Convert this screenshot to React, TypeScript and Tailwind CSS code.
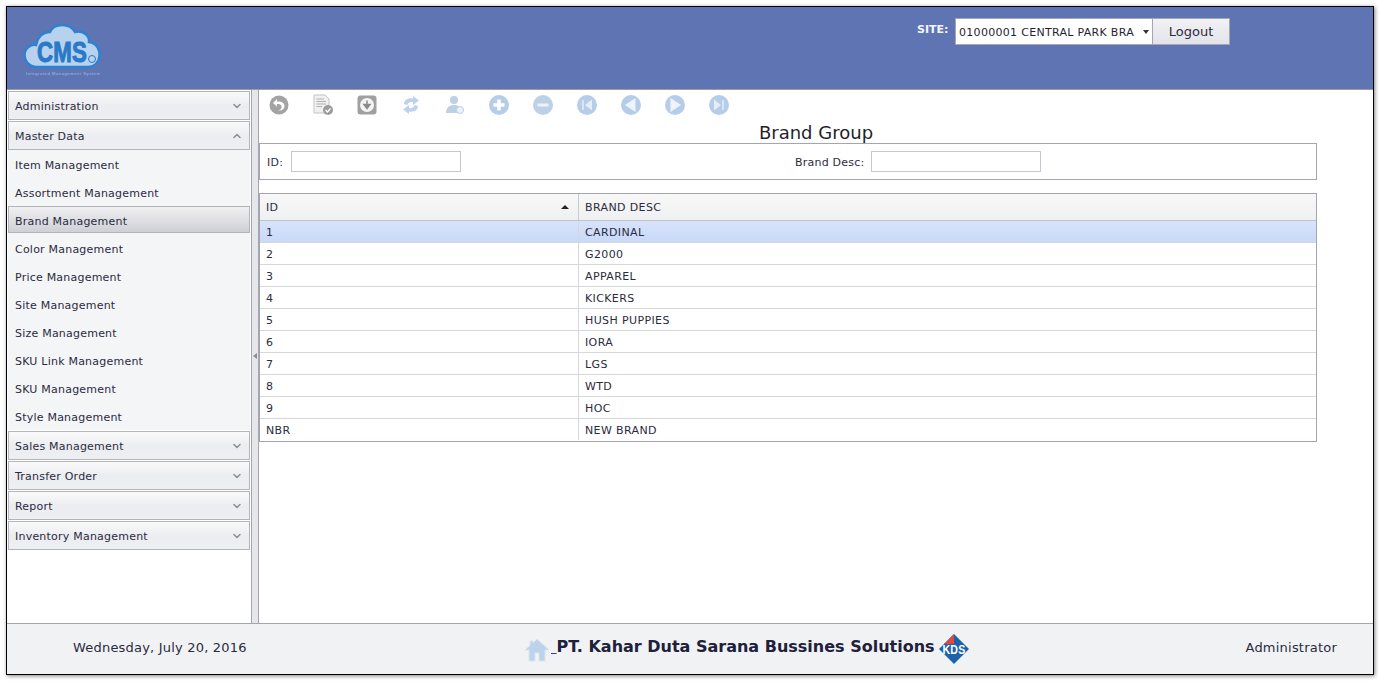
import { ChevronDown, ChevronUp } from 'lucide-react';

const menuTop = ['Administration', 'Master Data'];
const subItems = ['Item Management', 'Assortment Management', 'Brand Management', 'Color Management', 'Price Management', 'Site Management', 'Size Management', 'SKU Link Management', 'SKU Management', 'Style Management'];
const menuBottom = ['Sales Management', 'Transfer Order', 'Report', 'Inventory Management'];
const rows = [
  ['1', 'CARDINAL'], ['2', 'G2000'], ['3', 'APPAREL'], ['4', 'KICKERS'], ['5', 'HUSH PUPPIES'],
  ['6', 'IORA'], ['7', 'LGS'], ['8', 'WTD'], ['9', 'HOC'], ['NBR', 'NEW BRAND'],
];

function MenuHeader({ label, open }: { label: string; open?: boolean }) {
  return (
    <div className="flex h-[29px] items-center justify-between border border-[#b4b5b9] bg-gradient-to-b from-[#fafafb] via-[#ecedf0] to-[#eeeff2] pl-[6px] pr-[6px] text-[#2b2b40]">
      <span className="pt-[4px]">{label}</span>
      {open ? <ChevronUp size={12} strokeWidth={3} className="text-[#8d8f94]" /> : <ChevronDown size={12} strokeWidth={3} className="text-[#8d8f94]" />}
    </div>
  );
}

function Circle({ children, fill = '#b5cde9' }: { children?: React.ReactNode; fill?: string }) {
  return (
    <svg width="22" height="22" viewBox="0 0 22 22">
      <circle cx="11" cy="11" r="10" fill={fill} />
      {children}
    </svg>
  );
}

function Toolbar() {
  return (
    <div className="flex h-[30px] items-center gap-[22px] pl-[9px]">
      <svg width="22" height="22" viewBox="0 0 22 22">
        <circle cx="11" cy="11" r="9.5" fill="#a3a3a3" />
        <path d="M9 5 L5 9 L9 12.5 V10 C12 9.5 14 11 13.5 13.5 C13.2 15 12 16 10.5 16.5 C14 17 16.5 15 16.5 12 C16.5 8.5 13 7 9 7.5 Z" fill="#fff" />
      </svg>
      <svg width="22" height="22" viewBox="0 0 22 22">
        <path d="M2 1 H13 L17 5 V19 H2 Z" fill="#f0f0f0" stroke="#c4c4c4" />
        <path d="M4.500 5 H12 M4.500 7.500 H14 M4.500 10 H14 M4.500 12.500 H10" stroke="#b0b0b0" />
        <circle cx="16" cy="16" r="5" fill="#9c9c9c" />
        <path d="M13.500 16 L15.500 18 L18.500 14.500" stroke="#fff" strokeWidth="1.300" fill="none" />
      </svg>
      <svg width="22" height="22" viewBox="0 0 22 22">
        <rect x="1.500" y="1.500" width="19" height="19" rx="3" fill="#a0a0a0" />
        <circle cx="11" cy="11" r="7" fill="#f4f4f4" />
        <path d="M11 6.500 V12 M8 10.500 L11 14.500 L14 10.500 Z" stroke="#8a8a8a" strokeWidth="1.500" fill="#8a8a8a" />
      </svg>
      <svg width="22" height="22" viewBox="0 0 22 22" fill="#bdd2ec">
        <path d="M4 10 C4 6 8 3.500 13 4.500 V2 L19 6.500 L13 11 V8 C10 7.500 8 8.500 7.500 11 Z" />
        <path d="M18 12 C18 16 14 18.500 9 17.500 V20 L3 15.500 L9 11 V14 C12 14.500 14 13.500 14.500 11 Z" />
      </svg>
      <svg width="22" height="22" viewBox="0 0 22 22">
        <circle cx="10" cy="6" r="4" fill="#bdd0e6" />
        <path d="M2 19 C2 13 6 11 10 11 C14 11 18 13 18 19 Z" fill="#bdd0e6" />
        <circle cx="16" cy="16" r="3.500" fill="#eef2f7" stroke="#bdd0e6" />
      </svg>
      <Circle>
        <path d="M11 5.500 V16.500 M5.500 11 H16.500" stroke="#fff" strokeWidth="3.500" />
      </Circle>
      <Circle fill="#bcd0e8">
        <path d="M5.500 11 H16.500" stroke="#eef2f8" strokeWidth="3" />
      </Circle>
      <Circle>
        <path d="M7 6 V16" stroke="#e6edf6" strokeWidth="1.500" />
        <path d="M16 5.500 V16.500 L9 11 Z" fill="#e6edf6" />
      </Circle>
      <Circle>
        <path d="M15.500 4 V18 L5 11 Z" fill="#f0f4fa" />
      </Circle>
      <Circle>
        <path d="M6.500 4 V18 L17 11 Z" fill="#f0f4fa" />
      </Circle>
      <Circle>
        <path d="M15 6 V16" stroke="#e6edf6" strokeWidth="1.500" />
        <path d="M6 5.500 V16.500 L13 11 Z" fill="#e6edf6" />
      </Circle>
    </div>
  );
}

export default function App() {
  return (
    <div className="h-[681px] w-[1380px] bg-white p-[6px] text-[11px] tracking-[0.22px] text-[#2b2b40]" style={{ fontFamily: '"DejaVu Sans", Verdana, sans-serif' }}>
      <div className="flex h-[669px] flex-col border border-black shadow-[1px_1px_4px_rgba(0,0,0,0.5)]">
        <header className="flex h-[83px] shrink-0 items-start border-b border-[#9a9aa8] bg-[#5f75b3]">
          <svg width="84" height="62" viewBox="0 0 84 62" className="ml-[15px] mt-[15px]">
            <path d="M15 45 C6 45 2.500 38 2.500 33 C2.500 26 9 22 14 23 C15 16 20 10 28 10 C32 0.500 48 0.500 53 10 C60 8 68 13 67 20 C75 21 78 28 77.500 34 C77 41 72 45 66 45 Z" fill="#b6d2ee" stroke="#2f80cf" strokeWidth="2.500" />
            <text x="40" y="40" textAnchor="middle" fontFamily="Liberation Sans" fontWeight="700" fontSize="29" fill="#2a78c8" stroke="#2a78c8" strokeWidth="1" textLength="50" lengthAdjust="spacingAndGlyphs">CMS</text>
            <circle cx="70" cy="37" r="3.500" fill="#b6d2ee" stroke="#2a78c8" />
            <text x="41" y="53" textAnchor="middle" fontFamily="Liberation Sans" fontSize="4" fill="#9fc0e6" textLength="74">Integrated Management System</text>
          </svg>
          <div className="ml-auto mr-[143px] mt-[11px] flex items-start">
            <span className="mr-[6px] mt-[4px] w-[32px] text-[11px] font-bold tracking-normal text-[#f4f5fa]">SITE:</span>
            <div className="flex h-[27px] w-[198px] items-center border border-[#a3a6b5] bg-white pl-[3px] text-[11px] tracking-[0.3px] text-[#1f1f35]">
              <span className="w-[184px] whitespace-nowrap pt-[4px]">01000001 CENTRAL PARK BRA</span>
              <span className="h-0 w-0 border-x-[3.5px] border-t-[4px] border-x-transparent border-t-[#333]" />
            </div>
            <div className="flex h-[27px] w-[77px] items-center justify-center border border-l-0 border-[#a3a6b5] bg-gradient-to-b from-[#f2f2f4] to-[#e3e4ea] text-[13px] tracking-normal text-[#2b2b40]">Logout</div>
          </div>
        </header>

        <div className="flex min-h-0 flex-1">
          <aside className="flex w-[244px] shrink-0 flex-col gap-px px-px pt-px">
            <MenuHeader label={menuTop[0]} />
            <MenuHeader label={menuTop[1]} open />
            <div className="-mt-px bg-[#f4f5f7]">
              {subItems.map((item) =>
                item === 'Brand Management' ? (
                  <div key={item} className="mb-px flex h-[27px] items-center border border-[#b4b5b9] bg-gradient-to-b from-[#f0f0f2] to-[#cfd0d6] pl-[6px] pt-[5px]">{item}</div>
                ) : (
                  <div key={item} className="flex h-[28px] items-center pl-[7px] pt-[4px]">{item}</div>
                ),
              )}
            </div>
            {menuBottom.map((m) => <MenuHeader key={m} label={m} />)}
          </aside>

          <div className="flex w-[8px] shrink-0 items-center border-x border-[#a5a6ac] bg-[#e6e7eb]">
            <span className="ml-px mb-[2px] h-0 w-0 border-y-[3px] border-r-[4px] border-y-transparent border-r-[#8a8c92]" />
          </div>

          <main className="w-[1058px] shrink-0">
            <Toolbar />
            <h1 className="-mt-[3px] h-[26px] pl-[56px] text-center text-[18px] leading-[32px] tracking-normal text-[#1f1f2e]">Brand Group</h1>
            <div className="flex h-[37px] items-center border border-[#a5a4b4] pl-[7px]">
              <span className="w-[17px] pt-[4px]">ID:</span>
              <div className="ml-[7px] h-[21px] w-[170px] border border-[#c6c7d2] bg-white" />
              <span className="ml-[334px] w-[69px] whitespace-nowrap pt-[4px]">Brand Desc:</span>
              <div className="ml-[7px] h-[21px] w-[170px] border border-[#c6c7d2] bg-white" />
            </div>
            <div className="mt-[13px] border border-[#a5a4b4] tracking-[0.38px]">
              <div className="flex h-[27px] border-b border-[#c2c3c8] bg-gradient-to-b from-[#f8f8f8] to-[#eff0f1]">
                <div className="flex w-[319px] items-center justify-between border-r border-[#c8c9d0] pl-[6px] pr-[9px]">
                  <span className="pt-[2px]">ID</span>
                  <span className="h-0 w-0 border-x-[4px] border-b-[4px] border-x-transparent border-b-[#222]" />
                </div>
                <div className="flex items-center pl-[6px] pt-[2px]">BRAND DESC</div>
              </div>
              {rows.map(([id, desc], i) => (
                <div key={id} className={`flex h-[22px] items-center border-b ${i < rows.length - 1 ? 'border-[#d6d7dc]' : 'border-transparent'} ${i === 0 ? 'bg-gradient-to-b from-[#d8e3fb] to-[#c9d9f8]' : 'bg-white'}`}>
                  <div className="flex h-full w-[319px] items-center border-r border-[#d6d7dc] pl-[6px] pt-[4px]">{id}</div>
                  <div className="pl-[6px] pt-[4px]">{desc}</div>
                </div>
              ))}
            </div>
          </main>
        </div>

        <footer className="flex h-[51px] shrink-0 items-center border-t border-[#a5a6ac] bg-[#f1f2f4] text-[13px] text-[#2b2b40]">
          <span className="ml-[66px] mb-[2px] w-[451px] tracking-[0.2px]">Wednesday, July 20, 2016</span>
          <svg width="26" height="24" viewBox="0 0 26 24" className="mt-[2px]">
            <path d="M13 1 L25 12 H21 V23 H15 V15 H11 V23 H5 V12 H1 L6 7.500 V3 H9 V5 Z" fill="#bcd3ee" stroke="#e0e3e8" />
          </svg>
          <span className="mb-[4px] ml-[1px] text-[16px] font-bold tracking-normal text-[#20203a]">
            <span className="underline decoration-[#3040a0]">&nbsp;</span>PT. Kahar Duta Sarana Bussines Solutions
          </span>
          <svg width="30" height="30" viewBox="0 0 30 30" className="ml-[4px]">
            <path d="M15 0 L30 15 L15 30 L0 15 Z" fill="#1e63a8" />
            <path d="M15 0 L5 10 H15 Z" fill="#e04848" />
            <text x="15" y="19.500" textAnchor="middle" fontFamily="Liberation Sans" fontWeight="700" fontSize="12" fill="#fff" textLength="23" lengthAdjust="spacingAndGlyphs">KDS</text>
          </svg>
          <span className="ml-auto mb-[3px] mr-[36px] tracking-[0.22px]">Administrator</span>
        </footer>
      </div>
    </div>
  );
}
